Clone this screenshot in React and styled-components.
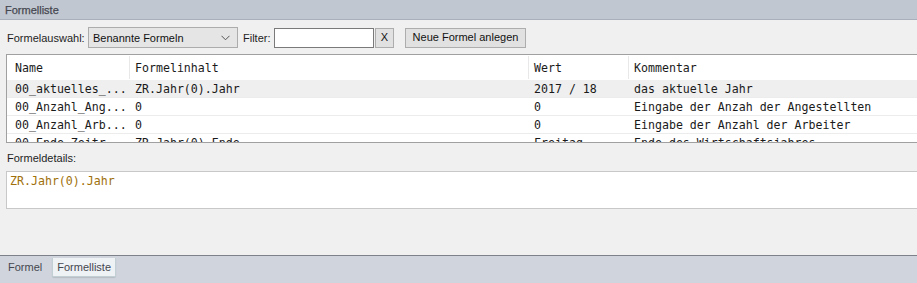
import React from 'react';
import styled, { createGlobalStyle } from 'styled-components';

const GlobalStyle = createGlobalStyle`
  html, body {
    margin: 0;
    padding: 0;
    background: #f0f0f0;
  }
  body {
    font-family: 'Liberation Sans', Arial, sans-serif;
    font-size: 11px;
    color: #1e1e1e;
  }
  * {
    box-sizing: border-box;
  }
`;

const StyledWindow = styled.div`
  width: 917px;
  height: 283px;
  display: flex;
  flex-direction: column;
  background: #f0f0f0;
  overflow: hidden;
`;

const StyledTitle = styled.header`
  height: 20px;
  flex: none;
  display: flex;
  align-items: center;
  padding-left: 5px;
  background: #c1c7d0;
  border-bottom: 1px solid #a9b0bc;
  color: #454750;
  font-size: 11px;
  -webkit-text-stroke: 0.25px #454750;
`;

const StyledBody = styled.main`
  flex: 1;
  display: flex;
  flex-direction: column;
  padding: 7px 0 0 6px;
`;

const StyledToolbar = styled.div`
  display: flex;
  align-items: center;
  height: 21px;
`;

const StyledLabel = styled.span`
  width: ${({ $w }) => $w}px;
  flex: none;
  padding-left: 1px;
  white-space: nowrap;
`;

const StyledSelect = styled.div`
  width: 150px;
  height: 21px;
  display: flex;
  align-items: center;
  justify-content: space-between;
  padding: 0 7px 0 4px;
  background: #e5e5e5;
  border: 1px solid #acacac;
  color: #111;
  margin-right: 4px;
`;

const StyledInput = styled.div`
  width: 100px;
  height: 20px;
  background: #fff;
  border: 1px solid #7a7a7a;
`;

const StyledButton = styled.button`
  width: ${({ $w }) => $w}px;
  height: 20px;
  padding: 0;
  margin-left: ${({ $ml }) => $ml}px;
  background: #e1e1e1;
  border: 1px solid #adadad;
  font: inherit;
  color: #111;
  line-height: 1;
`;

const StyledTable = styled.div`
  margin-top: 6px;
  height: 89px;
  border: 1px solid #a0a0a0;
  border-right: none;
  background: #fff;
  overflow: hidden;
  font-family: 'DejaVu Sans Mono', 'Liberation Mono', monospace;
  font-size: 11.6px;
  color: #1a1a1a;
`;

const StyledRow = styled.div`
  display: grid;
  grid-template-columns: 122px 399px 100px 1fr;
  height: ${({ $head }) => ($head ? 25 : 18)}px;
  align-items: center;
  padding-top: ${({ $head }) => ($head ? 1 : 0)}px;
  background: ${({ $sel }) => ($sel ? '#efefef' : '#fff')};
  border-bottom: 1px solid ${({ $head }) => ($head ? '#fff' : '#ececec')};
  white-space: nowrap;
`;

const StyledCell = styled.div`
  height: 100%;
  display: flex;
  align-items: center;
  padding-left: ${({ $first }) => ($first ? 7 : 5)}px;
  border-left: 1px solid ${({ $head, $first }) => ($head && !$first ? '#e8e8e8' : 'transparent')};
  overflow: hidden;
`;

const StyledDetailsLabel = styled.div`
  margin-top: 7px;
  height: 16px;
  display: flex;
  align-items: center;
  padding-left: 1px;
`;

const StyledDetails = styled.div`
  margin-top: 5px;
  height: 38px;
  background: #fff;
  border: 1px solid #c8c8c8;
  border-right: none;
  padding: 2px 0 0 3px;
  font-family: 'DejaVu Sans Mono', 'Liberation Mono', monospace;
  font-size: 11.6px;
  color: #a0700a;
`;

const StyledTabs = styled.nav`
  height: 28px;
  flex: none;
  display: flex;
  align-items: flex-start;
  gap: 5px;
  padding: 2px 0 0 3px;
  background: #d0d5dd;
  border-top: 1px solid #7d828a;
  color: #45474f;
`;

const StyledTab = styled.div`
  height: 19px;
  display: flex;
  align-items: center;
  padding: 0 4px;
  background: ${({ $active }) => ($active ? '#eef2f5' : 'transparent')};
  border: 1px solid ${({ $active }) => ($active ? '#c2d0d6' : 'transparent')};
  border-top: none;
  border-radius: 0 0 2px 2px;
  box-shadow: ${({ $active }) => ($active ? '0 1px 1px rgba(0,0,0,0.12)' : 'none')};
`;

const rows = [
  ['00_aktuelles_...', 'ZR.Jahr(0).Jahr', '2017 / 18', 'das aktuelle Jahr'],
  ['00_Anzahl_Ang...', '0', '0', 'Eingabe der Anzah der Angestellten'],
  ['00_Anzahl_Arb...', '0', '0', 'Eingabe der Anzahl der Arbeiter'],
  ['00_Ende_Zeitr...', 'ZR.Jahr(0).Ende', 'Freitag', 'Ende des Wirtschaftsjahres'],
];

const Chevron = () => (
  <svg width="9" height="6" viewBox="0 0 9 6">
    <path d="M0.5 0.8 L4.5 4.8 L8.5 0.8" fill="none" stroke="#555" strokeWidth="1" />
  </svg>
);

export default function App() {
  return (
    <>
      <GlobalStyle />
      <StyledWindow>
        <StyledTitle>Formelliste</StyledTitle>
        <StyledBody>
          <StyledToolbar>
            <StyledLabel $w={82}>Formelauswahl:</StyledLabel>
            <StyledSelect>
              <span>Benannte Formeln</span>
              <Chevron />
            </StyledSelect>
            <StyledLabel $w={32}>Filter:</StyledLabel>
            <StyledInput />
            <StyledButton $w={19} $ml={1}>X</StyledButton>
            <StyledButton $w={121} $ml={11}>Neue Formel anlegen</StyledButton>
          </StyledToolbar>

          <StyledTable>
            <StyledRow $head>
              {['Name', 'Formelinhalt', 'Wert', 'Kommentar'].map((h, i) => (
                <StyledCell key={h} $head $first={i === 0}>{h}</StyledCell>
              ))}
            </StyledRow>
            {rows.map((r, idx) => (
              <StyledRow key={r[0]} $sel={idx === 0}>
                {r.map((c, i) => (
                  <StyledCell key={i} $first={i === 0}>{c}</StyledCell>
                ))}
              </StyledRow>
            ))}
          </StyledTable>

          <StyledDetailsLabel>Formeldetails:</StyledDetailsLabel>
          <StyledDetails>ZR.Jahr(0).Jahr</StyledDetails>
        </StyledBody>
        <StyledTabs>
          <StyledTab>Formel</StyledTab>
          <StyledTab $active>Formelliste</StyledTab>
        </StyledTabs>
      </StyledWindow>
    </>
  );
}
